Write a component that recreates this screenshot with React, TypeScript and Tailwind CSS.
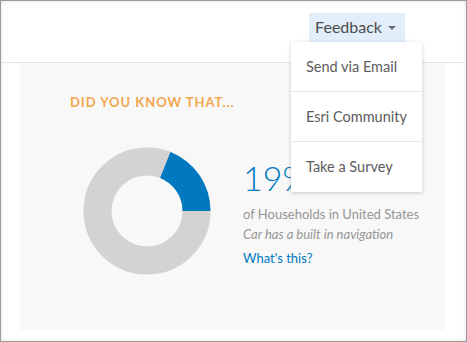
const MENU = ["Send via Email", "Esri Community", "Take a Survey"];

const Donut = () => (
  <svg width="128" height="128" viewBox="0 0 128 128" className="shrink-0">
    <circle cx="64" cy="64" r="49.5" fill="none" stroke="#d3d3d3" strokeWidth="28" />
    <path d="M87.4 4.9 A63.5 63.5 0 0 1 127.5 64 L99.5 64 A35.5 35.5 0 0 0 77.1 31 Z" fill="#0079c1" />
  </svg>
);

export default function App() {
  return (
    <div className="relative h-[342px] w-[467px] overflow-hidden border border-[#9a9a9a] bg-white font-['Lato',sans-serif] shadow-[inset_0_0_4px_rgba(0,0,0,0.12)]">
      <div className="flex h-[62px] justify-end border-b border-[#e4e4e4] pr-[61px] pt-[12px]">
        <div className="relative">
          <button className="flex h-[29px] items-center gap-[6px] bg-[#e2eefa] pb-[2px] pl-[6px] pr-[9px] text-[16px] text-[#4c4c4c]">
            Feedback
            <span className="mt-[2px] h-0 w-0 border-x-[4px] border-t-[4px] border-x-transparent border-t-[#6e6e6e]" />
          </button>
          <div className="absolute right-[-17px] top-[29px] z-10 w-[131px] bg-white shadow-[0_1px_4px_rgba(0,0,0,0.2)]">
            {MENU.map((item, i) => (
              <div
                key={item}
                className={`flex h-[50px] items-center whitespace-nowrap px-[15px] text-[14.5px] text-[#5c5c5c] ${i < MENU.length - 1 ? "border-b border-[#e8e8e8]" : ""}`}
              >
                {item}
              </div>
            ))}
          </div>
        </div>
      </div>
      <div className="pl-[19px] pr-[21px]">
        <div className="h-[267px] bg-[#f8f8f8] pl-[50px] pt-[30px]">
          <div className="text-[13px] font-bold uppercase tracking-[0.075em] text-[#f3a74d]">Did you know that...</div>
          <div className="mt-[34px] flex items-start">
            <div className="ml-[13px]">
              <Donut />
            </div>
            <div className="ml-[32px] mt-[11px] flex flex-col">
              <div className="text-[34px] font-light leading-[40px] text-[#0079c1]">19%</div>
              <div className="mt-[6px] text-[13px] leading-[20px] text-[#959595]">of Households in United States</div>
              <div className="text-[13px] italic leading-[20px] text-[#959595]">Car has a built in navigation</div>
              <div className="mt-[4px] text-[13px] leading-[20px] text-[#0079c1]">What's this?</div>
            </div>
          </div>
        </div>
      </div>
    </div>
  );
}
